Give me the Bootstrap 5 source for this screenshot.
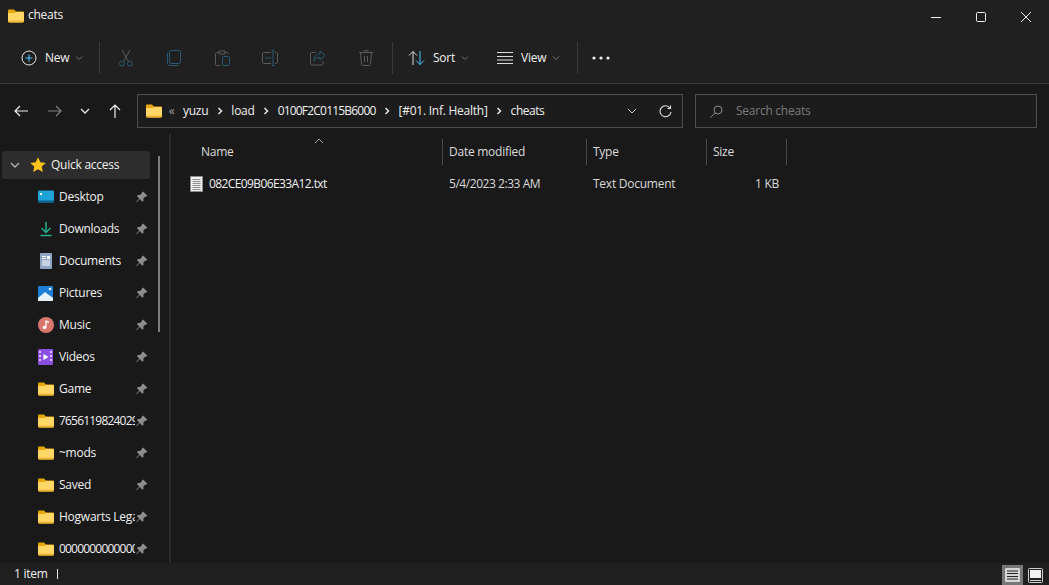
<!DOCTYPE html>
<html lang="en">
<head>
  <meta charset="UTF-8" />
  <meta name="viewport" content="width=device-width, initial-scale=1.0"/>
  <title>cheats</title>
  <link href="https://cdn.jsdelivr.net/npm/bootstrap@5.3.0/dist/css/bootstrap.min.css" rel="stylesheet"/>
  <style>
    html, body { height: 100%; overflow: hidden; }
    body {
      background: #191919;
      color: #f0f0f0;
      font-family: "Open Sans", "Noto Sans", "Liberation Sans", sans-serif;
      font-size: 12px;
      letter-spacing: -0.25px;
      line-height: 16px;
    }
    .explorer { width: 1049px; height: 585px; }
    .tight-1 { letter-spacing: -0.45px; }
    .tight-2 { letter-spacing: -0.6px; }
    .tight-3 { letter-spacing: -0.8px; }

    /* title bar */
    .title-bar { height: 32px; background: #202020; padding-left: 8px; padding-right: 1px; }
    .title-bar span { margin-left: 4px; margin-bottom: 2px; }
    .win-btn { width: 45px; height: 32px; padding-top: 1px; }

    /* command bar */
    .cmd-bar { height: 52px; background: #202020; border-bottom: 1px solid #3a3a3a; padding-left: 12px; }
    .cmd-sep { width: 1px; height: 32px; background: #3a3a3a; flex: none; }
    .cmd-icon { width: 48px; height: 40px; }
    .cmd-icon.first { margin-left: 2px; }
    .cmd-sep.after-icons { margin-left: 2px; }
    .cmd-text { height: 40px; }
    .cmd-new { width: 87px; padding-left: 9px; }
    .cmd-sort { width: 89px; padding-left: 9px; margin-left: 6px; }
    .cmd-view { width: 85px; padding-left: 9px; }
    .cmd-chev { margin-left: 6px; }
    .cmd-dots { width: 46px; height: 40px; }

    /* address row */
    .nav-row { height: 50px; padding-left: 4px; padding-top: 4px; }
    .nav-btn { width: 34px; height: 32px; flex: none; }
    .nav-btn.slim { width: 26px; }
    .addr-box, .search-box {
      height: 34px;
      border: 1px solid #4d4d4d;
      background: #1c1c1c;
    }
    .addr-box { width: 546px; margin-left: 5px; padding-left: 8px; }
    .search-box { width: 342px; margin-left: 12px; padding-left: 14px; color: #7b7b7b; }
    .search-box span { margin-left: 5px; }
    .crumb-more { width: 11px; margin: 0 6px 0 4px; text-align: center; color: #a0a0a0; }
    .crumb-sep { width: 8px; margin: 0 7.5px; flex: none; }
    .drop-btn { margin-right: 11px; }
    .refresh-btn { width: 34px; }

    /* body */
    .main-area { height: 429px; }
    .side-pane {
      width: 171px;
      flex: none;
      position: relative;
      border-right: 2px solid #2b2b2b;
      padding-top: 17px;
      overflow: hidden;
    }
    .side-scroll { position: absolute; left: 158px; top: 22px; width: 2px; height: 176px; background: #7d7d7d; }
    .side-row { height: 32px; padding-left: 38px; }
    .side-row .side-name { width: 76px; margin-left: 5px; white-space: nowrap; overflow: hidden; flex: none; }
    .side-row .pin { margin-left: 1px; flex: none; }
    .side-top {
      height: 28px;
      width: 148px;
      margin: 0 0 2px 2px;
      padding-left: 8px;
      background: #2d2d2d;
      border-radius: 3px;
    }
    .side-star { margin-left: 10px; }
    .side-top .side-name { margin-left: 5px; }

    .file-pane { flex: 1; position: relative; }
    .sort-caret { position: absolute; left: 143px; top: 4px; }
    .file-grid { display: grid; grid-template-columns: 272px 144px 120px 80px; }
    .head-row { height: 26px; margin-top: 5px; color: #dcdcdc; }
    .head-cell { border-right: 1px solid #4a4a4a; padding-left: 6px; height: 26px; display: flex; align-items: center; }
    .head-cell.first { padding-left: 30px; }
    .file-row { height: 22px; margin-top: 8px; }
    .file-cell { padding-left: 6px; display: flex; align-items: center; color: #d9d9d9; }
    .file-cell.first { padding-left: 19px; color: #f0f0f0; }
    .file-cell.first svg { margin-right: 6px; }
    .file-cell.size { justify-content: flex-end; padding-right: 8px; }

    /* status bar */
    .status-bar { height: 22px; background: #202020; padding-left: 14px; }
    .status-tick { width: 1px; height: 10px; background: #e6e6e6; margin-left: 9px; }
    .view-active { width: 21px; height: 20px; background: #777; margin-top: 2px; }
    .view-other { width: 21px; height: 20px; margin: 2px 3px 0 2px; }
  </style>
</head>
<body>
  <svg width="0" height="0" class="position-absolute">
    <symbol id="folder" viewBox="0 0 16 16">
      <path d="M0 2.700C0 2 .5 1.500 1.200 1.500h4.200c.4 0 .7.1 1 .4L8 3.500h6.800c.7 0 1.200.5 1.200 1.200V7H0z" fill="#e8a70c"/>
      <path d="M0 5.100h6.600L8 4.100h6.800c.7 0 1.200.5 1.200 1.200v8c0 .7-.5 1.200-1.200 1.200H1.200C.5 14.500 0 14 0 13.300z" fill="#ffd766"/>
      <path d="M0 13.300c0 .7.5 1.200 1.200 1.200h13.600c.7 0 1.200-.5 1.200-1.200v-.6H0z" fill="#eeb02a"/>
    </symbol>
    <symbol id="pin" viewBox="0 0 12 12">
      <path d="M7.200.6l4.200 4.200-1.300.9-.7-.2-2 2 .1 2.200-1.100 1L3.800 8 1 11H.5v-.5l2.800-3L.8 5.100l1-1.100 2.200.1 2-2-.2-.7z" fill="#8c8c8c"/>
    </symbol>
    <symbol id="chev" viewBox="0 0 8 8">
      <path d="M1 2.500l3 3 3-3" fill="none" stroke="currentColor" stroke-width="1"/>
    </symbol>
    <symbol id="crumb" viewBox="0 0 8 8">
      <path d="M2.500 1l3 3-3 3" fill="none" stroke="#e6e6e6" stroke-width="1.500"/>
    </symbol>
  </svg>

  <div class="explorer d-flex flex-column">
    <div class="title-bar d-flex align-items-center">
      <svg width="16" height="16"><use href="#folder"/></svg>
      <span>cheats</span>
      <div class="ms-auto d-flex">
        <div class="win-btn d-flex align-items-center justify-content-center">
          <svg width="12" height="12"><path d="M1 6.500h10" stroke="#eee"/></svg>
        </div>
        <div class="win-btn d-flex align-items-center justify-content-center">
          <svg width="12" height="12"><rect x="1.500" y="1.500" width="9" height="9" rx="1" fill="none" stroke="#eee"/></svg>
        </div>
        <div class="win-btn d-flex align-items-center justify-content-center">
          <svg width="12" height="12"><path d="M1 1l10 10M11 1L1 11" stroke="#eee"/></svg>
        </div>
      </div>
    </div>

    <div class="cmd-bar d-flex align-items-center">
      <div class="cmd-text cmd-new d-flex align-items-center">
        <svg width="16" height="16" class="me-2"><circle cx="8" cy="8" r="7" fill="none" stroke="#e4e4e4"/><path d="M8 4.500v7M4.500 8h7" stroke="#4cc2ff" stroke-width="1.100"/></svg>
        <span>New</span>
        <svg width="8" height="8" class="cmd-chev text-secondary"><use href="#chev"/></svg>
      </div>
      <div class="cmd-sep"></div>
      <div class="cmd-icon first d-flex align-items-center justify-content-center">
        <svg width="16" height="18" fill="none" stroke="#295a75"><circle cx="4" cy="14.500" r="2.500"/><circle cx="12" cy="14.500" r="2.500"/><path d="M5.500 12.500L12 1M10.500 12.500L4 1" stroke="#5b5b5b"/></svg>
      </div>
      <div class="cmd-icon d-flex align-items-center justify-content-center">
        <svg width="14" height="16" fill="none"><rect x="2.500" y=".5" width="11" height="13" rx="2" stroke="#295a75"/><path d="M.5 3v10c0 1.500 1 2.500 2.500 2.500h8" stroke="#295a75"/></svg>
      </div>
      <div class="cmd-icon d-flex align-items-center justify-content-center">
        <svg width="15" height="16" fill="none"><path d="M4 2.500H2C1 2.500.5 3 .5 4v10c0 1 .5 1.500 1.500 1.500h3M4 1h6v3H4zM10 2.500h2c1 0 1.500.5 1.500 1.500" stroke="#5b5b5b"/><rect x="7.500" y="6.500" width="7" height="9" rx="1" stroke="#295a75"/></svg>
      </div>
      <div class="cmd-icon d-flex align-items-center justify-content-center">
        <svg width="16" height="16" fill="none"><path d="M9 2.500H2C1 2.500.5 3 .5 4v8c0 1 .5 1.500 1.500 1.500h7M13 2.500h1c1 0 1.500.5 1.500 1.500v8c0 1-.5 1.500-1.500 1.500h-1" stroke="#5b5b5b"/><path d="M3 8h6M11 .5v15M9.500.5h3M9.500 15.500h3" stroke="#295a75"/></svg>
      </div>
      <div class="cmd-icon d-flex align-items-center justify-content-center">
        <svg width="16" height="16" fill="none"><path d="M6 2.500H2C1 2.500.5 3 .5 4v9.500c0 1 .5 1.500 1.500 1.500h9.500c1 0 1.500-.5 1.500-1.500V11" stroke="#5b5b5b"/><path d="M10 1l5 4.500L10 10V7.500c-3 0-4.500 1-6 3.500 0-4 2-7 6-7.200z" stroke="#295a75"/></svg>
      </div>
      <div class="cmd-icon d-flex align-items-center justify-content-center">
        <svg width="14" height="16" fill="none" stroke="#5b5b5b"><path d="M0 2.500h14M5 2.500V1.500c0-.7.3-1 1-1h2c.7 0 1 .3 1 1v1M1.500 2.500l1 11.500c.1 1 .6 1.500 1.500 1.500h6c.9 0 1.400-.5 1.500-1.500l1-11.500M5.500 6v6M8.500 6v6"/></svg>
      </div>
      <div class="cmd-sep after-icons"></div>
      <div class="cmd-text cmd-sort d-flex align-items-center">
        <svg width="17" height="16" class="me-2" fill="none"><path d="M5 15V1.500M1 5.500l4-4 4 4" stroke="#dcdcdc"/><path d="M12 1v13.500M8 10.500l4 4 4-4" stroke="#4cc2ff"/></svg>
        <span>Sort</span>
        <svg width="8" height="8" class="cmd-chev text-secondary"><use href="#chev"/></svg>
      </div>
      <div class="cmd-text cmd-view d-flex align-items-center">
        <svg width="16" height="14" class="me-2" fill="none" stroke="#dcdcdc"><path d="M0 1.500h16M0 5.500h16M0 9h16M0 12.500h16"/></svg>
        <span>View</span>
        <svg width="8" height="8" class="cmd-chev text-secondary"><use href="#chev"/></svg>
      </div>
      <div class="cmd-sep ms-1"></div>
      <div class="cmd-dots d-flex align-items-center justify-content-center">
        <svg width="18" height="4" fill="#eee"><circle cx="2" cy="2" r="1.600"/><circle cx="9" cy="2" r="1.600"/><circle cx="16" cy="2" r="1.600"/></svg>
      </div>
    </div>

    <div class="nav-row d-flex align-items-center">
      <div class="nav-btn d-flex align-items-center justify-content-center">
        <svg width="14" height="12" fill="none" stroke="#f0f0f0" stroke-width="1.200"><path d="M1 6h13M6 1L1 6l5 5"/></svg>
      </div>
      <div class="nav-btn d-flex align-items-center justify-content-center">
        <svg width="14" height="12" fill="none" stroke="#808080" stroke-width="1.200"><path d="M0 6h13M8 1l5 5-5 5"/></svg>
      </div>
      <div class="nav-btn slim d-flex align-items-center justify-content-center">
        <svg width="10" height="10" fill="none" stroke="#e6e6e6" stroke-width="1.300"><path d="M1 3l4 4 4-4"/></svg>
      </div>
      <div class="nav-btn d-flex align-items-center justify-content-center">
        <svg width="12" height="14" fill="none" stroke="#f0f0f0" stroke-width="1.200"><path d="M6 14V1M1 6l5-5 5 5"/></svg>
      </div>
      <div class="addr-box d-flex align-items-center">
        <svg width="16" height="16"><use href="#folder"/></svg>
        <span class="crumb-more">«</span>
        <span>yuzu</span>
        <svg width="8" height="8" class="crumb-sep"><use href="#crumb"/></svg>
        <span>load</span>
        <svg width="8" height="8" class="crumb-sep"><use href="#crumb"/></svg>
        <span class="tight-3">0100F2C0115B6000</span>
        <svg width="8" height="8" class="crumb-sep"><use href="#crumb"/></svg>
        <span>[#01. Inf. Health]</span>
        <svg width="8" height="8" class="crumb-sep"><use href="#crumb"/></svg>
        <span class="tight-1">cheats</span>
        <div class="ms-auto d-flex align-items-center">
          <svg width="10" height="10" class="drop-btn" fill="none" stroke="#cfcfcf"><path d="M1 3l4 4 4-4"/></svg>
          <div class="refresh-btn d-flex justify-content-center">
            <svg width="13" height="13" fill="none" stroke="#e0e0e0" stroke-width="1.100"><path d="M11 3A5.500 5.500 0 1 0 12 7M11.500 .5v3h-3"/></svg>
          </div>
        </div>
      </div>
      <div class="search-box d-flex align-items-center">
        <svg width="13" height="13" class="me-2" fill="none" stroke="#8a8a8a"><circle cx="8" cy="5" r="4"/><path d="M5 8L.5 12.500"/></svg>
        <span>Search cheats</span>
      </div>
    </div>

    <div class="main-area d-flex">
      <div class="side-pane" id="sidePane">
        <div class="side-scroll"></div>
        <div class="side-top d-flex align-items-center">
          <svg width="10" height="10" fill="none" stroke="#b4b4b4" stroke-width="1.300"><path d="M1 3l4 4 4-4"/></svg>
          <svg width="16" height="16" class="side-star" viewBox="0 0 16 16"><path d="M8 .3l2.300 5 5.400.6-4 3.700 1.100 5.400L8 12.300l-4.800 2.700 1.100-5.400-4-3.700 5.400-.6z" fill="#fcc419"/></svg>
          <span class="side-name">Quick access</span>
        </div>
      </div>

      <div class="file-pane">
        <svg class="sort-caret" width="10" height="6" fill="none" stroke="#a0a0a0"><path d="M1 5l4-4 4 4"/></svg>
        <div class="file-grid head-row">
          <div class="head-cell first">Name</div>
          <div class="head-cell">Date modified</div>
          <div class="head-cell">Type</div>
          <div class="head-cell">Size</div>
        </div>
        <div class="file-grid file-row">
          <div class="file-cell first tight-2">
            <svg width="13" height="16" viewBox="0 0 13 16"><rect x=".5" y=".5" width="12" height="15" fill="#f2f2f2" stroke="#8a8a8a"/><path d="M2.500 3.500h8M2.500 5.500h8M2.500 7.500h8M2.500 9.500h8M2.500 11.500h8M2.500 13.500h8" stroke="#8c8c8c"/></svg>
            082CE09B06E33A12.txt
          </div>
          <div class="file-cell tight-1">5/4/2023 2:33 AM</div>
          <div class="file-cell">Text Document</div>
          <div class="file-cell size">1 KB</div>
        </div>
      </div>
    </div>

    <div class="status-bar d-flex align-items-center">
      <span>1 item</span>
      <div class="status-tick"></div>
      <div class="ms-auto d-flex">
        <div class="view-active d-flex align-items-center justify-content-center">
          <svg width="15" height="14"><rect width="15" height="14" rx="1" fill="#d6d6d6"/><path d="M2 3h11M2 5.500h11M2 8.500h11M2 11h11" stroke="#222"/></svg>
        </div>
        <div class="view-other d-flex align-items-center justify-content-center">
          <svg width="15" height="15" fill="none"><rect x=".5" y=".5" width="14" height="14" rx="1" stroke="#cfcfcf"/><rect x="2" y="2" width="11" height="8" fill="#f2f2f2"/><path d="M2 12.500h11" stroke="#cfcfcf"/></svg>
        </div>
      </div>
    </div>
  </div>

  <script>
    const pinSvg = '<svg class="pin" width="12" height="12"><use href="#pin"/></svg>';
    const folderSvg = '<svg width="16" height="16"><use href="#folder"/></svg>';
    const sideItems = [
      { name: "Desktop", icon: '<svg width="16" height="16" viewBox="0 0 16 16"><rect y="1.500" width="16" height="12" rx="1" fill="#1fa2d6"/><path d="M0 11.500h16v1c0 .6-.4 1-1 1H1c-.6 0-1-.4-1-1z" fill="#0d5f8f"/><path d="M2 4h2v2H2z" fill="#fff"/></svg>' },
      { name: "Downloads", icon: '<svg width="16" height="16" viewBox="0 0 16 16" fill="none" stroke="#23b08f" stroke-width="1.500"><path d="M8 1v10M3.500 7L8 11.500 12.500 7M2.500 14.500h11"/></svg>' },
      { name: "Documents", icon: '<svg width="16" height="16" viewBox="0 0 16 16"><rect x="2" width="12" height="16" rx="1" fill="#8ea6c4"/><path d="M9 3h3v3H9z" fill="#fff"/><path d="M4 3.500h4M4 5.500h4M4 8h8M4 10h8M4 12h8" stroke="#fff"/></svg>' },
      { name: "Pictures", icon: '<svg width="16" height="16" viewBox="0 0 16 16"><rect y="1" width="15" height="15" rx="1" fill="#1d7fd6"/><path d="M0 13l7-6 8 6v2c0 .6-.4 1-1 1H1c-.6 0-1-.4-1-1z" fill="#e8f2fb"/><circle cx="12" cy="4" r="1.300" fill="#e8f2fb"/></svg>' },
      { name: "Music", icon: '<svg width="16" height="16" viewBox="0 0 16 16"><circle cx="8" cy="8" r="8" fill="#d9766b"/><path d="M8 3.500v7" stroke="#fff" stroke-width="1.300"/><path d="M8 3.500l3 1v1.500L8 5z" fill="#fff"/><circle cx="6.500" cy="10.500" r="1.800" fill="#fff"/></svg>' },
      { name: "Videos", icon: '<svg width="16" height="16" viewBox="0 0 16 16"><rect width="15" height="16" rx="1" fill="#8a4fe0"/><path d="M5.500 5v6l5-3z" fill="#fff"/><path d="M1 2h2v2H1zM1 6h2v2H1zM1 10h2v2H1zM12 2h2v2h-2zM12 6h2v2h-2zM12 10h2v2h-2z" fill="#d8c4fa"/></svg>' },
      { name: "Game", icon: folderSvg },
      { name: "76561198240295", icon: folderSvg, cls: "tight-3" },
      { name: "~mods", icon: folderSvg },
      { name: "Saved", icon: folderSvg },
      { name: "Hogwarts Legacy", icon: folderSvg },
      { name: "000000000000000", icon: folderSvg, cls: "tight-3" }
    ];

    const sidePane = document.getElementById("sidePane");
    sideItems.forEach(item => {
      sidePane.innerHTML += `
        <div class="side-row d-flex align-items-center">
          ${item.icon}
          <span class="side-name ${item.cls || ""}">${item.name}</span>
          ${pinSvg}
        </div>`;
    });
  </script>
  <script src="https://cdn.jsdelivr.net/npm/bootstrap@5.3.0/dist/js/bootstrap.bundle.min.js"></script>
</body>
</html>
